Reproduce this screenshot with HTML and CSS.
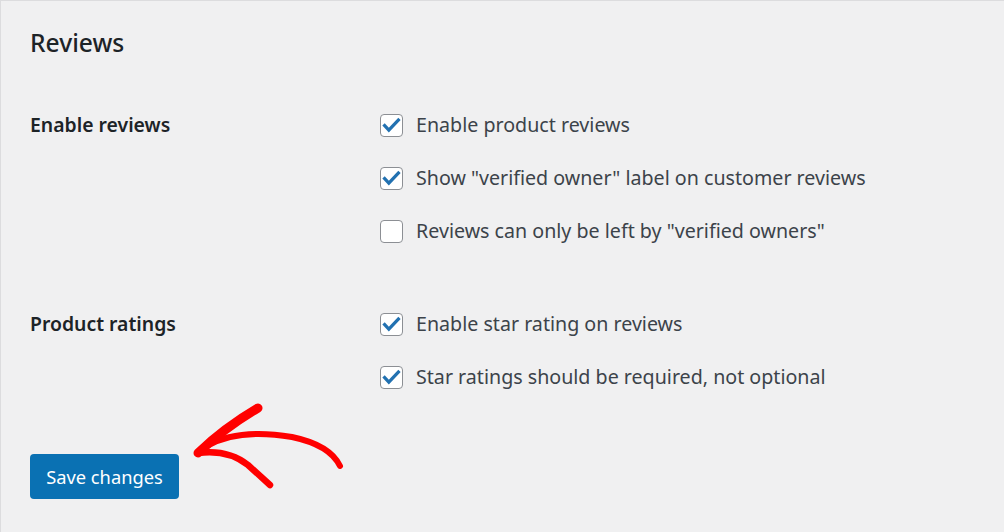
FILE: index.html
```html
<!DOCTYPE html>
<html lang="en">
<head>
  <meta charset="UTF-8">
  <title>Reviews settings</title>
  <link rel="stylesheet" href="styles.css">
</head>
<body>
  <div class="pagina">
    <h2 class="titulo">Reviews</h2>

    <div class="grupo">
      <div class="rotulo">Enable reviews</div>
      <div class="opcoes">
        <label class="opcao"><span class="caixa marcada"><svg viewBox="0 0 23 23"><path d="M4 11.5 L8.6 16.5 L19 5.5"/></svg></span>Enable product reviews</label>
        <label class="opcao"><span class="caixa marcada"><svg viewBox="0 0 23 23"><path d="M4 11.5 L8.6 16.5 L19 5.5"/></svg></span>Show "verified owner" label on customer reviews</label>
        <label class="opcao"><span class="caixa"></span>Reviews can only be left by "verified owners"</label>
      </div>
    </div>

    <div class="grupo segundo">
      <div class="rotulo">Product ratings</div>
      <div class="opcoes">
        <label class="opcao"><span class="caixa marcada"><svg viewBox="0 0 23 23"><path d="M4 11.5 L8.6 16.5 L19 5.5"/></svg></span>Enable star rating on reviews</label>
        <label class="opcao"><span class="caixa marcada"><svg viewBox="0 0 23 23"><path d="M4 11.5 L8.6 16.5 L19 5.5"/></svg></span>Star ratings should be required, not optional</label>
      </div>
    </div>

    <button class="guardar">Save changes</button>

    <!-- seta desenhada por cima -->
    <svg class="seta" width="1004" height="532" viewBox="0 0 1004 532">
      <g fill="none" stroke="#ff0000" stroke-linecap="round" stroke-linejoin="round">
        <path d="M258 408 Q224 428 198 453" stroke-width="9"/>
        <path d="M207 446 Q238 428 292 437 Q330 445 340 466" stroke-width="6"/>
        <path d="M198 453 Q228 449 248 465 L270 485" stroke-width="6.5"/>
      </g>
    </svg>
  </div>
</body>
</html>
```

FILE: styles.css
```css
* {
  box-sizing: border-box;
}

body {
  margin: 0;
  background: #f0f0f1;
  font-family: 'Noto Sans', 'Open Sans', sans-serif;
  color: #3c434a;
}

.pagina {
  position: relative;
  height: 532px;
  padding: 0 29px;
  border-top: 1px solid #dcdcde;
  border-left: 1px solid #dcdcde;
  overflow: hidden;
}

.titulo {
  margin: 24px 0 0;
  font-size: 24.6px;
  font-weight: 500;
  line-height: 36px;
  color: #1d2327;
}

.grupo {
  display: grid;
  grid-template-columns: 350px 1fr;
  margin-top: 49px;
}

.grupo.segundo {
  margin-top: 63px;
}

.rotulo {
  font-size: 19.4px;
  font-weight: 600;
  color: #1d2327;
  line-height: 30px;
}

.opcoes {
  display: flex;
  flex-direction: column;
  gap: 23px;
}

.opcao {
  display: flex;
  align-items: center;
  gap: 13px;
  font-size: 19.65px;
  line-height: 30px;
}

.caixa {
  width: 23px;
  height: 23px;
  border: 1px solid #8c8f94;
  border-radius: 4px;
  background: #fff;
  flex: none;
  display: flex;
}

.caixa svg {
  width: 21px;
  height: 21px;
  fill: none;
  stroke: #2271b1;
  stroke-width: 3.6;
  stroke-linecap: square;
}

.guardar {
  display: block;
  margin-top: 62px;
  width: 149px;
  height: 45px;
  background: #0a71b3;
  color: #fff;
  border: none;
  border-radius: 4px;
  font-family: inherit;
  font-size: 18.3px;
  cursor: pointer;
}

.seta {
  position: absolute;
  left: -1px;
  top: -1px;
  pointer-events: none;
}
```
